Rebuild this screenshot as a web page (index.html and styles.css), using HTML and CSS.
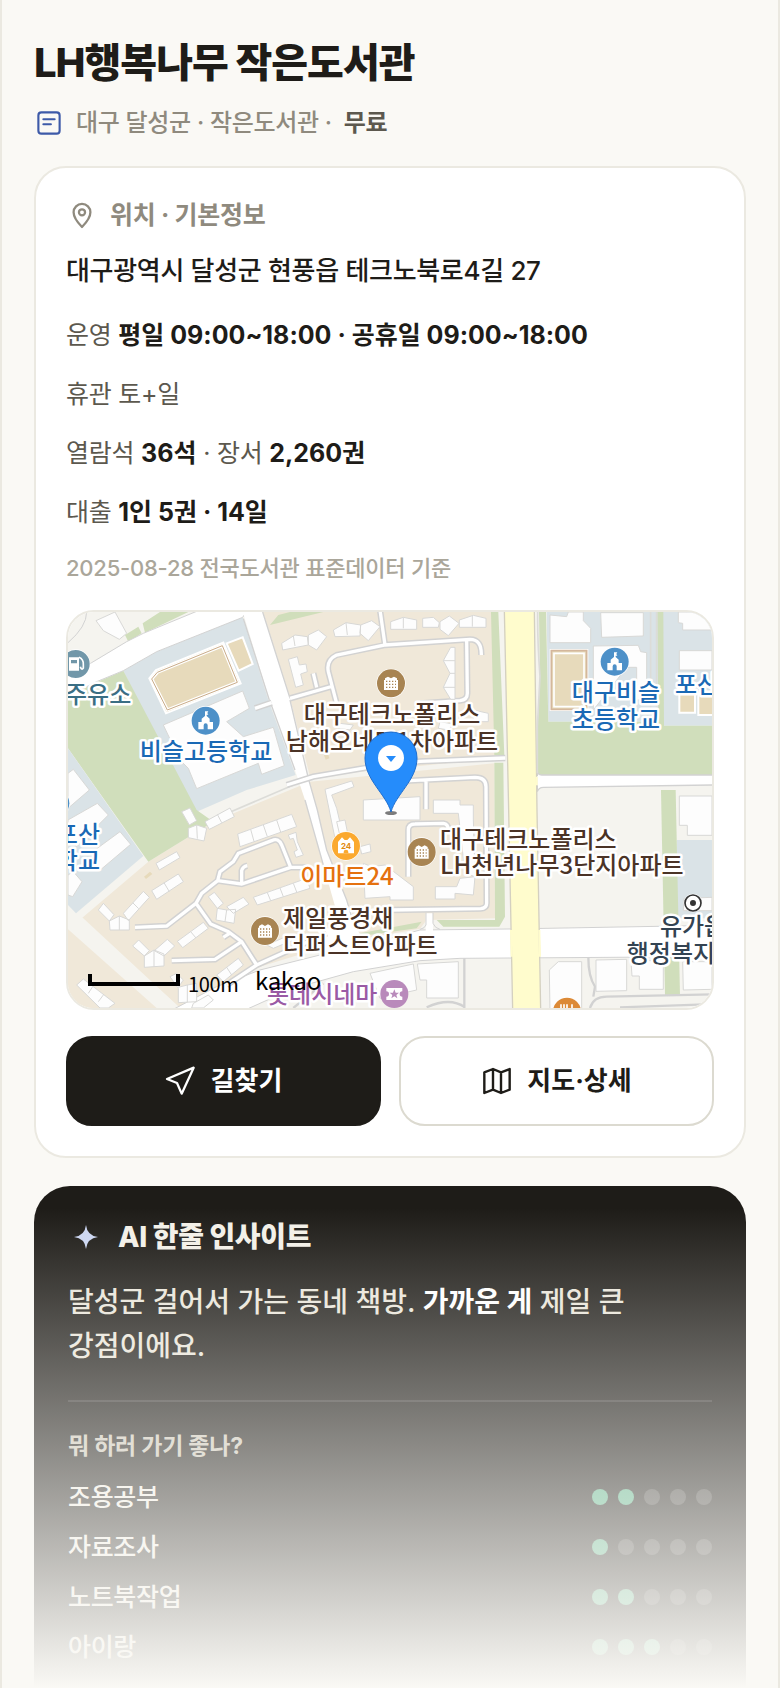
FILE: index.html
```html
<!DOCTYPE html>
<html lang="ko">

<head>
  <meta charset="UTF-8">
  <meta name="viewport" content="width=device-width, initial-scale=1.0">
  <title>LH행복나무 작은도서관</title>
  <link rel="stylesheet" href="styles.css">
</head>

<body>
  <div class="page">
    <header class="page-header">
      <h1>LH행복나무 작은도서관</h1>
      <p class="subtitle">
        <svg class="icon-book" viewBox="0 0 24 24" fill="none" stroke="currentColor" stroke-width="1.7" stroke-linecap="round" stroke-linejoin="round"><rect x="3.5" y="3.5" width="17" height="17" rx="2.4"/><path d="M7.5 9h9M7.5 13h6"/></svg>
        <span>대구 달성군 · 작은도서관 ·</span>
        <b>무료</b>
      </p>
    </header>

    <section class="card">
      <h2 class="card-title">
        <svg viewBox="0 0 24 24" fill="none" stroke="currentColor" stroke-width="1.7" stroke-linecap="round" stroke-linejoin="round"><path d="M12 21c-4-4-6.300-7-6.300-11a6.300 6.300 0 0 1 12.600 0c0 4-2.300 7-6.300 11z"/><circle cx="12" cy="10" r="2.300"/></svg>
        위치 · 기본정보
      </h2>
      <p class="address">대구광역시 달성군 현풍읍 테크노북로4길 27</p>
      <div class="info">
        <p>운영 <b>평일 09:00~18:00 · 공휴일 09:00~18:00</b></p>
        <p>휴관 토+일</p>
        <p>열람석 <b>36석</b> · 장서 <b>2,260권</b></p>
        <p>대출 <b>1인 5권 · 14일</b></p>
      </div>
      <p class="source">2025-08-28 전국도서관 표준데이터 기준</p>

      <div class="map">
        <svg viewBox="0 0 644 396" preserveAspectRatio="xMidYMid slice" role="img" aria-label="지도">
          <defs>
            <g id="pin-school">
              <circle r="44" fill="#fff"/>
              <circle r="42" fill="#4d90c8"/>
              <path fill="#fff" d="M-22 26V4h10v-10l10-8v-14h10l-3 5 3 5H3v4l9 8V4h10v22H6V14a6 6 0 0 0-12 0v12z"/>
            </g>
            <g id="pin-apt">
              <circle r="44" fill="#fff"/>
              <circle r="42" fill="#a88452"/>
              <path fill="#fff" d="M-21 20v-30h3v-5l9-5 9 5 9-5 9 5v5h3v30z"/>
              <path stroke="#a88452" stroke-width="4" stroke-dasharray="4 5" d="M-15-6h30M-15 3h30M-15 12h30"/>
            </g>
            <g id="lanes">
              <path d="M690 295L820 258M830 310L805 215Q798 180 830 165L975 135 960 30M975 135L1230 118Q1265 118 1264 165M1220 120L1222 280Q1222 300 1200 302L1080 310M770 262L760 220M585 325L635 308"/>
              <path d="M680 555L760 530 920 503 1080 484 1336 474M990 545L1245 532Q1278 532 1278 560L1280 910Q1280 925 1262 926L990 930M1098 540V628M1045 830V690Q1045 672 1065 672L1150 670Q1165 672 1165 690"/>
              <path d="M740 802H692L665 735Q655 712 635 722L535 760 520 785 480 815 473 842 545 852 692 802M545 852V812Q548 800 562 797M473 842L425 880 408 910 320 978 225 982M408 910L452 972 505 995 545 1025 590 1095M545 1025L465 1078 335 1082M490 1012L512 998M500 1155L590 1095 800 1000"/>
            </g>
          </defs>

          <g transform="scale(.33333) translate(-24 -36)">
            <rect x="24" y="36" width="1940" height="1200" fill="#f5f4ef"/>

            <!-- land -->
            <path fill="#f0e8d9" d="M608 36H1295L1312 475 750 530 690 295z"/>
            <path fill="#f0e8d9" d="M1303 490L750 545 460 665 265 785 65 955 360 1224H24V980L360 1224 600 1100 830 1030 1080 986 1100 960 1305 955z"/>
            <path fill="#f0e8d9" d="M24 1000L320 1224H24z"/>
            <path fill="#f5f4ef" d="M24 950L65 950 360 1224H290L24 988z"/>
            <path fill="#dae3e7" d="M190 212L290 155 548 52 625 300 707 525 560 570 400 640z"/>
            <path fill="#d0debb" d="M90 255L190 212 410 630 460 665 265 785 24 445V280z"/>
            <path fill="#dae3e7" d="M24 445L250 768 48 940 24 915z"/>
            <path fill="#d0debb" d="M195 105L235 80 245 100 205 125zM248 70L300 36H385L255 98zM630 75L655 45 690 36H790zM1293 36H1315L1333 465H1303zM1303 488H1330L1335 950 1318 980H1150L1130 960H1305zM900 1000L1085 965 1070 985 905 1008z"/>
            <path fill="#dae3e7" d="M1460 36H1956V377H1812L1795 365H1465z"/>
            <path fill="#d0debb" d="M1437 36H1458L1465 365H1812V377H1956V525H1433V380L1440 230zM1792 36H1810L1812 370H1795z"/>
            <path fill="#dae3e7" d="M1850 720H1956V955H1850z"/>
            <path fill="#d0debb" d="M1803 570H1847L1860 1185H1815z"/>

            <!-- main roads -->
            <path fill="#fff" stroke="#d2d2d2" stroke-width="3" d="M20 230L95 188 200 125 250 100 410 34H560L548 52 290 155 190 212 110 245 20 290z"/>
            <path fill="#fff" d="M548 34H608L690 295 745 535 772 630 800 750 860 900 920 1060H865L800 830 735 600 705 510 630 305z"/>
            <path fill="none" stroke="#d2d2d2" stroke-width="4" d="M550 56L628 300M634 315L705 510M735 600L800 830M608 36L690 295M690 300L745 535 772 630 800 750 860 900 885 985"/>
            <path fill="#fff" stroke="#d2d2d2" stroke-width="3" d="M340 1228L470 1160 600 1110 800 1060 900 1040 1080 990 1350 987 1960 976V1070L1200 1075 1080 1082 880 1115 700 1165 560 1228z"/>
            <path fill="#fff" stroke="#d2d2d2" stroke-width="4" d="M1960 525H1445Q1432 525 1432 510V575Q1436 562 1450 562L1960 555z"/>
            <path fill="#fff" d="M1425 528h40v28h-40zM770 985h120v70H800zM1097 940h22v60h-22z"/>
            <path fill="none" stroke="#d2d2d2" stroke-width="3" d="M24 128Q80 80 80 36M1098 938V975Q1095 985 1080 988M1119 938V970Q1125 985 1140 988"/>
            <path fill="#fffccd" stroke="#d4d0c0" stroke-width="4" d="M1333 30H1423L1431 630 1442 1230H1358L1346 630z"/>
            <path fill="none" stroke="#fffccd" stroke-width="6" d="M1353 990L1355 1070M1438 990L1440 1070M1430 530V556"/>
            <path fill="none" stroke="#d2d2d2" stroke-width="7" d="M1213 1075V1225M1585 1072Q1585 1130 1605 1160L1600 1190M1590 1224Q1600 1190 1640 1190L1960 1183M1680 1222L1960 1212M1100 1222Q1170 1190 1215 1222M700 1224L790 1150"/>
            <path fill="none" stroke="#dcdcd8" stroke-width="5" d="M1772 36V330M1790 36V330M490 645L700 555M1433 36Q1432 120 1440 230L1432 380V520"/>

            <use href="#lanes" class="lane-edge"/>
            <use href="#lanes" class="lane"/>

            <!-- sport grounds -->
            <g fill="#e7dabb" stroke="#fff" stroke-width="6">
              <path d="M268 235L288 210 490 128 542 250 318 340z"/>
              <path d="M500 130L548 112 578 192 536 212z"/>
              <path d="M1472 150H1582V330H1472z"/>
              <path d="M1858 280H1905V338H1858zM1915 280H1960V345H1915z"/>
            </g>
            <path fill="none" stroke="#fff" stroke-width="10" d="M275 237L292 217 487 137 532 247 322 330z"/>
            <path fill="none" stroke="#c9ab88" stroke-width="3" d="M275 237L292 217 487 137 532 247 322 330z"/>
            <path fill="none" stroke="#d4b79c" stroke-width="5" d="M1474 152H1580V328H1474z"/>
            <path fill="none" stroke="#fff" stroke-width="5" d="M1482 160H1572V320H1482z"/>
            <path fill="#e7dabb" d="M252 830L270 815 277 822 258 837zM790 460L802 455 808 475 797 479z"/>

            <!-- buildings -->
            <g class="building">
              <path d="M108 62L165 36 200 100 178 118 130 92z"/>
              <path d="M310 375L548 273 568 325 500 365 550 410 640 382 673 497 605 523 595 490 410 566 385 505 360 480z"/>
              <path d="M24 520L40 508 88 570 24 625zM24 660L112 610 145 645 50 740 24 700zM105 750L180 695 212 733 115 815 90 790zM24 825L40 815 66 845 38 890 24 885z"/>
              <path d="M665 130L705 105 742 110 745 135 668 150zM745 105L775 90 800 110 770 150 745 135zM820 90L858 68 902 75 900 108 825 110zM902 75L935 62 960 80 925 122 900 100z"/>
              <path d="M700 108L705 138M858 68L862 105"/>
              <path d="M685 178L712 170 718 195 738 192 742 215 722 222 730 255 707 262z"/>
              <path d="M992 65L1030 52 1070 60V88H992zM1088 55L1120 52 1138 68 1135 82H1088zM1140 65L1168 48 1197 70 1165 107 1140 88zM1198 60L1240 46 1278 55V82H1198zM1030 52V85M1237 46V80"/>
              <path d="M1172 142H1185V298H1172L1150 262 1170 220 1150 182zM1150 182H1185M1170 220H1185M1150 262H1185"/>
              <path d="M840 370L880 375 870 390 835 385zM1140 365L1180 372 1165 390 1135 385zM1240 330L1285 340V365H1240z"/>
              <path d="M795 568L875 543 882 560 815 585 830 625 850 710 825 715z"/>
              <path d="M830 665L855 660 862 695 838 700zM910 600L1080 590V660H910zM1120 600H1200V615H1240V660L1245 830 1215 820 1195 640H1120z"/>
              <path d="M910 790L935 800 975 795 1060 860V900H990V890L915 895zM1126 860L1190 860 1200 835 1245 830 1240 885 1185 880V897H1126z"/>
              <path d="M900 740L930 732 933 755 905 762z"/>
              <path d="M1470 45L1520 50 1525 36H1570V62L1592 85V128H1470zM1622 38H1750V108L1625 112zM1600 138L1735 136 1742 155 1760 158V300H1730V202H1700L1600 330zM1855 36H1956V90H1868V70L1855 68zM1858 152H1956V210H1858z"/>
              <path d="M1858 588H1956V706H1882V676H1858zM1872 895L1956 892V932H1870z"/>
              <path d="M1468 1110L1495 1085H1565V1235H1470zM1608 1080L1700 1078V1172L1608 1174zM1714 1098L1735 1082H1810V1168H1738V1128H1716zM1868 1085H1956V1168L1870 1170zM1072 1092L1195 1085V1194H1100V1140H1080zM930 1120L1060 1092 1070 1170 960 1195z"/>
              <path d="M533 702L695 643 710 680 540 740zM572 688L582 724M610 675L622 710M650 660L662 696"/>
              <path d="M685 705L708 697 712 725 730 765 708 772 702 755 712 750 700 715 690 718z"/>
              <path d="M288 790L350 755 360 773 298 810zM365 635L390 624 410 662 388 675zM385 685L410 675 440 685 432 723 385 713zM410 675L412 716M435 665L510 624 523 650 448 688zM472 643L485 668"/>
              <path d="M275 872L355 822 370 845 290 898zM312 848L328 875M115 930L130 910 162 944 148 963zM148 963L178 948 208 960V990H150zM178 948V990M190 940L250 874 268 892 205 962zM218 908L236 926"/>
              <path d="M580 892L740 835 750 865 592 915zM622 878L632 902M660 864L670 890M700 850L710 876"/>
              <path d="M445 890L463 877 490 910 472 925zM472 925L500 930 527 928 522 970 468 960zM500 930L495 965M500 920L550 892 567 912 520 940z"/>
              <path d="M352 1024L430 967 445 985 368 1043zM392 995L408 1014M218 1038L236 1020 268 1052 253 1068zM253 1068L282 1050 312 1062V1098L253 1102zM282 1050V1100M283 1052L322 1018 344 1038 312 1068z"/>
              <path d="M330 1130L350 1120 370 1140 355 1162 382 1155 410 1150V1205L355 1208V1165zM382 1155V1206M470 1125L535 1075 550 1095 490 1145zM500 1102L515 1125M400 1210L445 1185 460 1200 430 1224H395z"/>
              <path d="M50 1155L70 1137 165 1210 145 1224H120zM85 1180L98 1160M115 1205L130 1185M620 1035L690 1005 700 1020 640 1045z"/>
            </g>

            <!-- poi icons -->
            <g transform="translate(47 192)"><circle r="44" fill="#fff"/><circle r="42" fill="#7197a9"/><path fill="#fff" d="M-20-20H10V20H-20z"/><path fill="#7197a9" d="M-14-12H4V-2H-14z"/><path fill="none" stroke="#fff" stroke-width="5" d="M10-20Q24-14 23 2V12Q18 20 14 8"/></g>
            <use href="#pin-school" x="437" y="362"/>
            <use href="#pin-school" x="1664" y="185"/>
            <use href="#pin-school" x="-14" y="610"/>
            <use href="#pin-apt" x="993" y="250"/>
            <use href="#pin-apt" x="1085" y="756"/>
            <use href="#pin-apt" x="615" y="993"/>
            <g transform="translate(858 738)"><circle r="44" fill="#fff"/><circle r="42" fill="#fba92f"/><path fill="#fff" d="M-24 22V-12L-12-26-4-18H4L12-26 24-12V22z"/><path fill="#fba92f" d="M-7 22V18a7 7 0 0 1 14 0V22z"/><text class="mart-mark" y="8">24</text></g>
            <g transform="translate(1003 1182)"><circle r="42" fill="#b98abb"/><path fill="#fff" d="M-24-18H24V-8a8 8 0 0 0 0 16V18H-24V8a8 8 0 0 0 0-16z"/><path fill="#b98abb" d="M0-14L4-4H14L6 3 9 13 0 7-9 13-6 3-14-4H-4z"/></g>
            <g transform="translate(1521 1235)"><circle r="44" fill="#fff"/><circle r="42" fill="#dc8a37"/><path fill="none" stroke="#fff" stroke-width="5" d="M-18-22V-5M-9-22V-5M0-22V-5M15-22V0"/></g>
            <g transform="translate(1899 909)"><circle r="28" fill="#fff"/><circle r="24" fill="#fff" stroke="#333" stroke-width="5"/><circle r="9" fill="#333"/></g>
          </g>

          <g class="label brown">
            <text x="324" y="111" text-anchor="middle">대구테크노폴리스</text>
            <text x="324" y="138" text-anchor="middle">남해오네뜨1차아파트</text>
            <text x="372" y="236">대구테크노폴리스</text>
            <text x="372" y="262">LH천년나무3단지아파트</text>
            <text x="215" y="315">제일풍경채</text>
            <text x="215" y="342">더퍼스트아파트</text>
          </g>
          <g class="label blue">
            <text x="138" y="148" text-anchor="middle">비슬고등학교</text>
            <text x="548" y="89" text-anchor="middle">대구비슬</text>
            <text x="548" y="116" text-anchor="middle">초등학교</text>
            <text x="607" y="81">포산</text>
            <text x="32" y="231" text-anchor="end">포산</text>
            <text x="32" y="257" text-anchor="end">학교</text>
          </g>
          <text class="label teal" x="-3" y="91">주유소</text>
          <text class="label orange" x="279" y="273" text-anchor="middle">이마트24</text>
          <text class="label purple" x="199" y="391">롯데시네마</text>
          <g class="label slate">
            <text x="625" y="323" text-anchor="middle">유가읍</text>
            <text x="625" y="350" text-anchor="middle">행정복지센터</text>
          </g>

          <!-- marker -->
          <ellipse cx="323" cy="201" rx="6" ry="2" fill="#444" opacity=".7"/>
          <path fill="#258cfb" stroke="#1f6fd0" d="M323 200C318 182 297 168 297 146a26 26 0 0 1 52 0C349 168 328 182 323 200z"/>
          <circle cx="323" cy="146" r="13" fill="#fff"/>
          <path fill="#258cfb" d="M318 144h10l-5 6z"/>

          <!-- scale -->
          <path fill="none" stroke="#000" stroke-width="4" d="M22 362V372H110V362"/>
          <text class="scale" x="120" y="380">100m</text>
          <text class="kakao" x="187" y="378">kakao</text>
        </svg>
      </div>

      <div class="actions">
        <button type="button" class="btn btn-dark">
          <svg viewBox="0 0 24 24" fill="none" stroke="currentColor" stroke-width="1.7" stroke-linejoin="round"><path d="M21.500 2L1.500 10.500l7.500 3 3.500 8z"/></svg>
          <span>길찾기</span>
        </button>
        <button type="button" class="btn">
          <svg viewBox="0 0 24 24" fill="none" stroke="currentColor" stroke-width="1.8" stroke-linejoin="round"><path d="M2.500 5.500L9 3l6 2.500L21.500 3v15.500L15 21l-6-2.500L2.500 21zM9 3v15.500M15 5.500V21"/></svg>
          <span>지도·상세</span>
        </button>
      </div>
    </section>

    <section class="insight">
      <h2 class="insight-title">
        <svg viewBox="0 0 24 24" fill="#cbd6f2"><path d="M12 4Q12.800 11.200 20 12 12.800 12.800 12 20 11.200 12.800 4 12 11.200 11.200 12 4z"/></svg>
        AI 한줄 인사이트
      </h2>
      <p class="insight-text">달성군 걸어서 가는 동네 책방. <b>가까운 게</b> 제일 큰 강점이에요.</p>
      <div class="ratings">
        <h3>뭐 하러 가기 좋나?</h3>
        <ul>
          <li>조용공부 <span class="dots"><i class="on"></i><i class="on"></i><i></i><i></i><i></i></span></li>
          <li>자료조사 <span class="dots"><i class="on"></i><i></i><i></i><i></i><i></i></span></li>
          <li>노트북작업 <span class="dots"><i class="on"></i><i class="on"></i><i></i><i></i><i></i></span></li>
          <li>아이랑 <span class="dots"><i class="on"></i><i class="on"></i><i class="on"></i><i></i><i></i></span></li>
        </ul>
      </div>
    </section>
    <div class="fade"></div>
  </div>
</body>

</html>
```

FILE: styles.css
```css
* {
  box-sizing: border-box;
}

body {
  margin: 0;
  background: #faf9f5;
  color: #1e1c18;
  font-family: Inter, "Noto Sans CJK KR", sans-serif;
  letter-spacing: -0.02em;
}

h1,
h2,
h3,
p,
ul {
  margin: 0;
  padding: 0;
}

svg {
  flex: none;
}

.page {
  position: relative;
  display: flex;
  flex-direction: column;
  min-height: 100vh;
  padding: 37px 32px 0;
  border: solid #ebe9e1;
  border-width: 0 2px;
}

h1 {
  font-size: 40px;
  line-height: 52px;
  font-weight: 800;
  letter-spacing: -1px;
}

.subtitle {
  display: flex;
  align-items: center;
  gap: 12px;
  margin: 16px 0 25px;
  font-size: 24px;
  font-weight: 500;
  line-height: 36px;
  color: #8f8a7e;
}

.subtitle svg {
  width: 30px;
  height: 30px;
  color: #3d5aa8;
}

.subtitle b {
  color: #5c584e;
}

.card {
  padding: 30px;
  margin-bottom: 28px;
  background: #fff;
  border: 2px solid #ebe9e1;
  border-radius: 32px;
}

.card-title {
  display: flex;
  align-items: center;
  gap: 12px;
  font-size: 25px;
  line-height: 34px;
  color: #8f8a7e;
}

.card-title svg {
  width: 32px;
  height: 32px;
}

.address {
  margin: 17px 0 21px;
  font-size: 26px;
  font-weight: 500;
  line-height: 44px;
}

.info {
  display: flex;
  flex-direction: column;
  gap: 17px;
  font-size: 25px;
  line-height: 42px;
  letter-spacing: -0.01em;
  color: #5c584e;
}

.info b {
  letter-spacing: 0;
  color: #1e1c18;
}

.source {
  margin: 18px 0 25px;
  font-size: 22px;
  font-weight: 500;
  line-height: 34px;
  letter-spacing: -0.01em;
  color: #aaa69a;
}

/* map */
.map {
  height: 400px;
  overflow: hidden;
  border: 2px solid #ebe9e1;
  border-radius: 28px;
}

.map svg {
  display: block;
  width: 100%;
  height: 100%;
}

.lane-edge {
  fill: none;
  stroke: #d2d2d2;
  stroke-width: 19;
}

.lane {
  fill: none;
  stroke: #fff;
  stroke-width: 10;
}

.building {
  fill: #fdfdfd;
  stroke: #d8d8d6;
  stroke-width: 3;
}

.label {
  font-family: "Noto Sans CJK KR", sans-serif;
  font-size: 24px;
  font-weight: 500;
  letter-spacing: 0;
  stroke: #fff;
  stroke-width: 5px;
  stroke-linejoin: round;
  paint-order: stroke;
}

.brown {
  fill: #4b3326;
}

.blue {
  fill: #1a69b5;
}

.teal {
  fill: #3a6e84;
}

.orange {
  fill: #e5710f;
}

.purple {
  fill: #9a5aa5;
}

.slate {
  fill: #334352;
}

.mart-mark {
  font-size: 24px;
  font-weight: 700;
  text-anchor: middle;
  fill: #e08a10;
}

.scale {
  font-family: "Noto Sans CJK KR", sans-serif;
  font-size: 20px;
}

.kakao {
  font-family: "Noto Sans CJK KR", sans-serif;
  font-size: 24px;
}

/* buttons */
.actions {
  display: flex;
  gap: 18px;
  margin-top: 26px;
}

.btn {
  flex: 1;
  display: flex;
  align-items: center;
  justify-content: center;
  gap: 14px;
  height: 90px;
  padding: 0;
  background: #fff;
  color: #1e1c18;
  border: 2px solid #dcdad0;
  border-radius: 26px;
  font-family: inherit;
  font-size: 26px;
  font-weight: 700;
  line-height: 32px;
}

.btn svg {
  width: 32px;
  height: 32px;
}

.btn-dark {
  background: #1e1c18;
  border-color: #1e1c18;
  color: #fff;
}

/* insight */
.insight {
  flex: 1;
  padding: 32px 34px 20px;
  background: #1e1c18;
  border-radius: 36px 36px 0 0;
  color: #f3f0e8;
}

.insight-title {
  display: flex;
  align-items: center;
  gap: 14px;
  font-size: 28px;
  line-height: 38px;
  font-weight: 800;
}

.insight-title svg {
  width: 36px;
  height: 36px;
}

.insight-text {
  margin: 24px 0 32px;
  font-size: 28px;
  font-weight: 500;
  line-height: 44px;
  letter-spacing: 0;
  word-break: keep-all;
  color: #e9e5da;
}

.insight-text b {
  color: #fff;
}

.ratings {
  padding-top: 28px;
  border-top: 2px solid rgba(255, 255, 255, 0.12);
}

.ratings h3 {
  margin-bottom: 17px;
  font-size: 23px;
  line-height: 32px;
  letter-spacing: -0.01em;
  color: #cbc6b8;
}

.ratings ul {
  display: flex;
  flex-direction: column;
  gap: 14px;
  list-style: none;
}

.ratings li {
  display: flex;
  align-items: center;
  justify-content: space-between;
  font-size: 25px;
  font-weight: 500;
  line-height: 36px;
}

.dots {
  display: flex;
  gap: 10px;
}

.dots i {
  width: 16px;
  height: 16px;
  border-radius: 50%;
  background: rgba(255, 255, 255, 0.18);
}

.dots .on {
  background: #57b187;
}

.fade {
  position: absolute;
  left: 0;
  right: 0;
  bottom: 0;
  height: 480px;
  background: linear-gradient(rgba(250, 249, 245, 0), #faf9f5);
}
```
